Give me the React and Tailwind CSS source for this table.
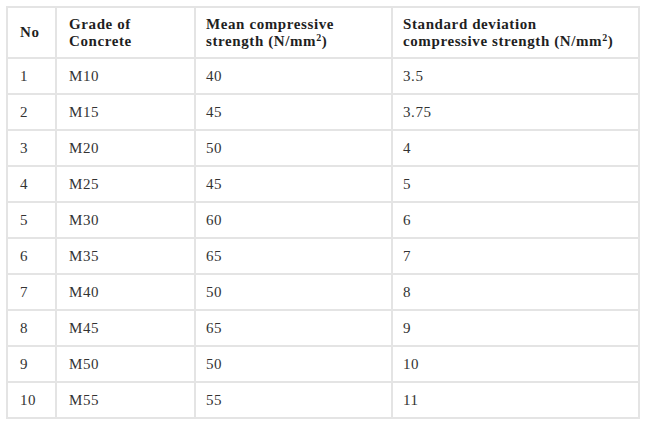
import React from "react";

const ROWS = [
  ["1", "M10", "40", "3.5"],
  ["2", "M15", "45", "3.75"],
  ["3", "M20", "50", "4"],
  ["4", "M25", "45", "5"],
  ["5", "M30", "60", "6"],
  ["6", "M35", "65", "7"],
  ["7", "M40", "50", "8"],
  ["8", "M45", "65", "9"],
  ["9", "M50", "50", "10"],
  ["10", "M55", "55", "11"],
];

const cell = "border-2 border-[#e4e4e4] align-middle text-left";

export default function App() {
  return (
    <div className="w-[646px] h-[434px] bg-white pt-[6px] pl-[6px]">
      <table className="table-fixed border-collapse w-[632px] font-['Liberation_Serif','Times_New_Roman',serif] text-[15px] tracking-[0.6px] text-[#333333]">
        <colgroup>
          <col className="w-[49px]" />
          <col className="w-[139px]" />
          <col className="w-[197px]" />
          <col className="w-[247px]" />
        </colgroup>
        <thead>
          <tr className="h-[51px] font-bold text-[#1f1f1f] leading-[17px]">
            <th className={`${cell} pl-[12px]`}>No</th>
            <th className={`${cell} pl-[12px]`}>
              Grade of
              <br />
              Concrete
            </th>
            <th className={`${cell} pl-[10px]`}>
              Mean compressive
              <br />
              strength (N/mm<sup className="text-[10px]">2</sup>)
            </th>
            <th className={`${cell} pl-[10px]`}>
              Standard deviation
              <br />
              compressive strength (N/mm<sup className="text-[10px]">2</sup>)
            </th>
          </tr>
        </thead>
        <tbody>
          {ROWS.map((r) => (
            <tr key={r[0]} className="h-[36px]">
              <td className={`${cell} pl-[12px]`}>{r[0]}</td>
              <td className={`${cell} pl-[12px]`}>{r[1]}</td>
              <td className={`${cell} pl-[10px]`}>{r[2]}</td>
              <td className={`${cell} pl-[10px]`}>{r[3]}</td>
            </tr>
          ))}
        </tbody>
      </table>
    </div>
  );
}
